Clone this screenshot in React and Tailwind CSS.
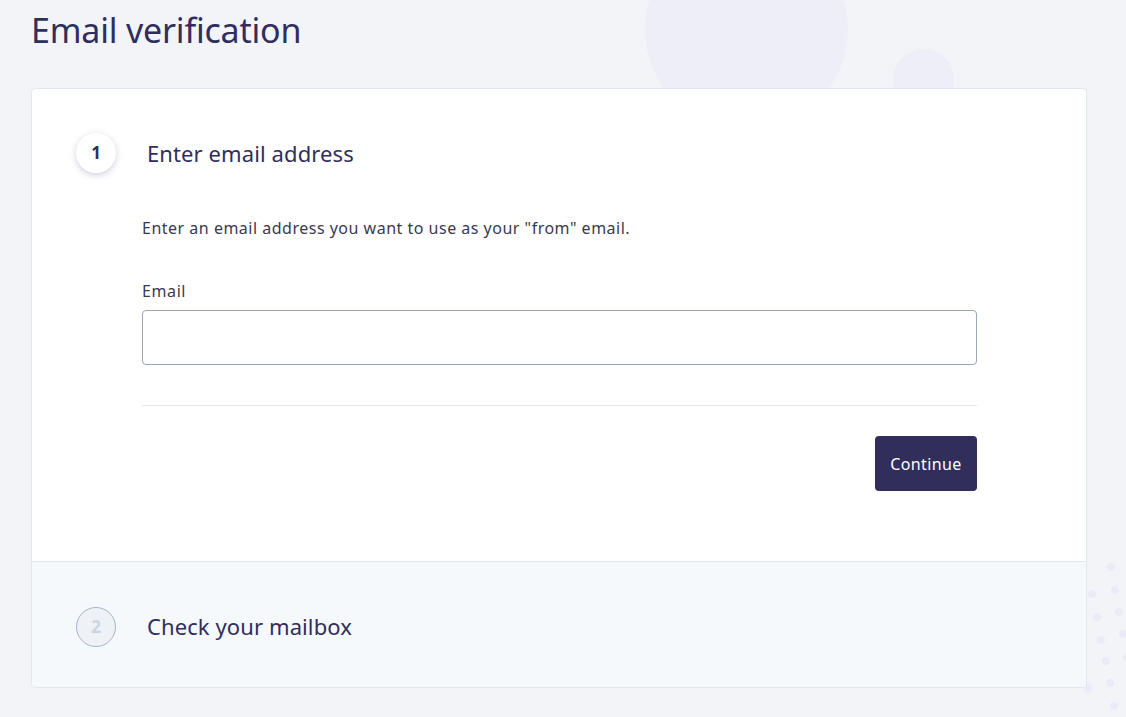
export default function App() {
  const dots = [
    [1111, 567], [1115, 590], [1119, 612], [1123, 634],
    [1092, 594], [1097, 617], [1101, 640], [1106, 661], [1110, 683], [1114, 706],
    [1088, 688], [1127, 657],
  ];

  return (
    <div
      className="relative min-h-[717px] overflow-hidden bg-[#f3f4f8] text-[#2f2e5c]"
      style={{ fontFamily: '"Noto Sans", "Open Sans", sans-serif' }}
    >
      {/* background decoration */}
      <div className="absolute left-[645px] top-[-72px] h-[203px] w-[203px] rounded-full bg-[#eeeef8]" />
      <div className="absolute left-[893px] top-[49px] h-[61px] w-[61px] rounded-full bg-[#eeeef8]" />
      <svg className="absolute left-0 top-0" width="1126" height="717">
        {dots.map(([x, y], i) => (
          <circle key={i} cx={x} cy={y} r="4" fill="#ebebf7" />
        ))}
      </svg>

      <div className="relative px-[31px] pb-[30px]">
        <h1 className="h-[88px] pt-[8px] text-[34px] font-normal leading-[44px] tracking-[-0.2px]">Email verification</h1>

        <div className="w-[1056px] overflow-hidden rounded-[4px] border border-[#e2e8f0] bg-white">
          <div className="px-[44px] pb-[70px] pt-[44px]">
            <div className="flex items-center gap-[31px]">
              <div className="flex h-[40px] w-[40px] items-center justify-center rounded-full bg-white text-[17px] font-bold shadow-[0_2px_6px_rgba(60,60,130,0.25)]">
                1
              </div>
              <h2 className="text-[22px] tracking-[0.1px]">Enter email address</h2>
            </div>

            <div className="ml-[66px] mr-[65px]">
              <p className="mt-[43px] text-[16px] tracking-[0.5px] text-[#3a3a4e]">
                Enter an email address you want to use as your "from" email.
              </p>
              <label className="mt-[39px] block text-[16px] tracking-[0.6px] text-[#3a3a4e]">Email</label>
              <input
                type="email"
                className="mt-[7px] block h-[55px] w-full rounded-[4px] border border-[#9aa5b8] bg-white px-3 outline-none"
              />
              <div className="mt-[40px] h-px bg-[#e5e7ef]" />
              <div className="mt-[30px] flex justify-end">
                <button className="h-[55px] w-[102px] rounded-[4px] bg-[#312e5c] text-[16px] tracking-[0.4px] text-white">
                  Continue
                </button>
              </div>
            </div>
          </div>

          <div className="flex h-[126px] items-center gap-[31px] border-t border-[#e2e8f0] bg-[#f6f9fc] px-[44px] pt-[4px]">
            <div className="flex h-[40px] w-[40px] items-center justify-center rounded-full border border-[#a8b3c6] bg-[#eef2f7] text-[17px] font-bold text-[#cbd4e1]">
              2
            </div>
            <h2 className="text-[22px] tracking-[0.1px]">Check your mailbox</h2>
          </div>
        </div>
      </div>
    </div>
  );
}
